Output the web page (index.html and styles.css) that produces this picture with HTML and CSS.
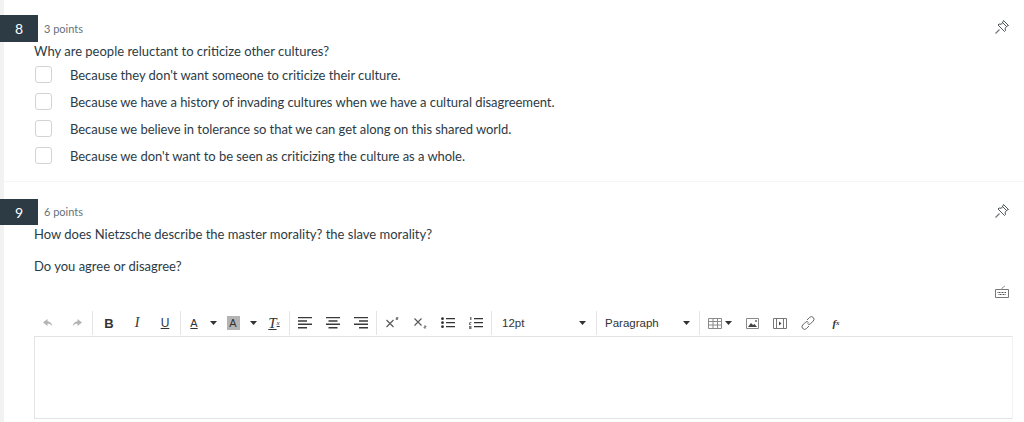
FILE: index.html
```html
<!DOCTYPE html>
<html lang="en">
<head>
<meta charset="utf-8">
<title>Quiz</title>
<link rel="stylesheet" href="styles.css">
</head>
<body>
<svg class="defs" width="0" height="0" aria-hidden="true">
  <symbol id="pin" viewBox="0 0 14 14">
    <path d="M.5 13.500 4.500 9.500" fill="none" stroke="#6d767a" stroke-width="1.100"/>
    <path d="M8.500.5l5 5-1.500.5-1.800 2.200.3 2.300-1 1-6.500-6.500 1-1 2.300.3L7.900 2z" fill="none" stroke="#4f585c" stroke-width="1"/>
    <path d="M7.500 2.500l4 4M5 7l2 2" stroke="#4f585c" stroke-width="1" fill="none"/>
  </symbol>
  <symbol id="caret" viewBox="0 0 7 4"><path d="M0 0h7L3.500 4z" fill="#333"/></symbol>
  <symbol id="align-left" viewBox="0 0 14 12"><path d="M0 0h14v1.300H0zM0 3.200h9v1.600H0zM0 6.500h14v1.600H0zM0 10h9v1.500H0z" fill="#3a3a3a"/></symbol>
  <symbol id="align-center" viewBox="0 0 14 12"><path d="M0 0h14v1.300H0zM2.500 3.200h9v1.600h-9zM0 6.500h14v1.600H0zM2.500 10h9v1.500h-9z" fill="#3a3a3a"/></symbol>
  <symbol id="align-right" viewBox="0 0 14 12"><path d="M0 0h14v1.300H0zM5 3.200h9v1.600H5zM0 6.500h14v1.600H0zM5 10h9v1.500H5z" fill="#3a3a3a"/></symbol>
</svg>
<main class="page">
  <section class="question q8">
    <header class="q-head">
      <span class="q-num">8</span>
      <span class="q-points">3 points</span>
      <svg class="pin" width="14" height="14"><use href="#pin"/></svg>
    </header>
    <p class="q-text">Why are people reluctant to criticize other cultures?</p>
    <ul class="options">
      <li class="option"><span class="check"></span>Because they don't want someone to criticize their culture.</li>
      <li class="option"><span class="check"></span>Because we have a history of invading cultures when we have a cultural disagreement.</li>
      <li class="option"><span class="check"></span>Because we believe in tolerance so that we can get along on this shared world.</li>
      <li class="option"><span class="check"></span>Because we don't want to be seen as criticizing the culture as a whole.</li>
    </ul>
  </section>
  <section class="question q9">
    <header class="q-head q-head-short">
      <span class="q-num">9</span>
      <span class="q-points q-points-up">6 points</span>
      <svg class="pin" width="14" height="14"><use href="#pin"/></svg>
    </header>
    <p class="q-text">How does Nietzsche describe the master morality? the slave morality?</p>
    <p class="q-text q-gap">Do you agree or disagree?</p>
    <div class="kbd-row">
      <svg width="14" height="14" viewBox="0 0 14 14"><path d="M.5 5.500h13v8H.5z" fill="none" stroke="#777"/><path d="M2.500 8.500h9M3.500 10.500h7" fill="none" stroke="#555" stroke-dasharray="1 .5"/><path d="M7 5.500V4l3-2" fill="none" stroke="#999"/></svg>
    </div>
    <div class="toolbar">
      <span class="tb"><svg width="10" height="8" viewBox="0 0 10 8"><path d="M4.500 0 0 3.500 4.500 7V4.800c2 0 3.500.5 5 2.500C9 4.200 7 2.500 4.500 2.300z" fill="#b4b4b4"/></svg></span>
      <span class="tb tb-redo"><svg width="10" height="8" viewBox="0 0 10 8"><path d="M5.500 0 10 3.500 5.500 7V4.800c-2 0-3.500.5-5 2.500C1 4.200 3 2.500 5.500 2.300z" fill="#b4b4b4"/></svg></span>
      <span class="sep sep-wide"></span>
      <span class="tb tb-b">B</span>
      <span class="tb tb-i">I</span>
      <span class="tb tb-u">U</span>
      <span class="sep"></span>
      <span class="tb tb-color">A</span>
      <svg class="caret caret-split" width="7" height="4"><use href="#caret"/></svg>
      <span class="tb tb-color tb-hl"><span class="hl">A</span></span>
      <svg class="caret caret-split" width="7" height="4"><use href="#caret"/></svg>
      <span class="tb tb-clear">T<sub>x</sub></span>
      <span class="sep"></span>
      <span class="tb"><svg width="14" height="12"><use href="#align-left"/></svg></span>
      <span class="tb"><svg width="14" height="12"><use href="#align-center"/></svg></span>
      <span class="tb"><svg width="14" height="12"><use href="#align-right"/></svg></span>
      <span class="sep"></span>
      <span class="tb"><svg width="13" height="12" viewBox="0 0 13 12"><path d="M.5 3l7 7M7.500 3l-7 7" fill="none" stroke="#555" stroke-width="1.100"/><path d="M10 .5h2v1h-2v1h2" fill="none" stroke="#555" stroke-width=".7"/></svg></span>
      <span class="tb"><svg width="13" height="12" viewBox="0 0 13 12"><path d="M.5 1.500l7 7M7.500 1.500l-7 7" fill="none" stroke="#555" stroke-width="1.100"/><path d="M10 9h2v1h-2v1h2" fill="none" stroke="#555" stroke-width=".7"/></svg></span>
      <span class="tb"><svg width="14" height="12" viewBox="0 0 14 12"><path d="M5 1h9v1.300H5zM5 5h9v1.300H5zM5 9h9v1.300H5z" fill="#333"/><circle cx="1.500" cy="1.700" r="1.400" fill="#333"/><circle cx="1.500" cy="5.700" r="1.400" fill="#333"/><circle cx="1.500" cy="9.700" r="1.400" fill="#333"/></svg></span>
      <span class="tb"><svg width="14" height="12" viewBox="0 0 14 12"><path d="M5 1h9v1.300H5zM5 5h9v1.300H5zM5 9h9v1.300H5z" fill="#333"/><path d="M1 0h1.500v3H1zM0 5h2.500v1H0v2h2.500M0 9h2.500v3H0" fill="#777"/></svg></span>
      <span class="sep"></span>
      <span class="select select-size">12pt<svg class="caret" width="7" height="4"><use href="#caret"/></svg></span>
      <span class="sep"></span>
      <span class="select select-format">Paragraph<svg class="caret" width="7" height="4"><use href="#caret"/></svg></span>
      <span class="sep"></span>
      <span class="tb-table"><svg width="14" height="11" viewBox="0 0 14 11"><path d="M.5.500h13v10H.5zM.5 3.500h13M.5 7h13M5 .5v10M9.500.5v10" fill="none" stroke="#8a8a8a"/></svg><svg class="caret" width="7" height="4"><use href="#caret"/></svg></span>
      <span class="tb tb-image"><svg width="13" height="11" viewBox="0 0 13 11"><path d="M.5.500h12v10H.5z" fill="none" stroke="#888"/><path d="M2 9l3-4 2 2 1.500-1L11 9z" fill="#444"/><circle cx="10" cy="3" r="1" fill="#666"/></svg></span>
      <span class="tb"><svg width="14" height="11" viewBox="0 0 14 11"><path d="M.5.500h13v10H.5zM3.500.5v10M10.500.5v10" fill="none" stroke="#777"/><path d="M6 3.500 8.500 5.500 6 7.500z" fill="#444"/></svg></span>
      <span class="tb"><svg width="14" height="14" viewBox="0 0 14 14"><path d="M6 4 8.500 1.500a2 2 0 0 1 3.800 3.500L9.500 7.800a2 2 0 0 1-3-.3M8 10l-2.500 2.500a2 2 0 0 1-3.800-3.500l2.800-2.800a2 2 0 0 1 3 .3" fill="none" stroke="#666"/></svg></span>
      <span class="tb tb-fx">f<sub>x</sub></span>
    </div>
    <div class="editor"></div>
  </section>
</main>
</body>
</html>
```
FILE: styles.css
```css
* { box-sizing: border-box; }
html, body { margin: 0; padding: 0; }
body {
  height: 422px;
  overflow: hidden;
  background: #fff;
  font-family: Lato, "Open Sans", sans-serif;
  color: #2d3b45;
  font-size: 13px;
}
.defs { position: absolute; }
.page {
  border-left: 4px solid #f2f2f2;
  height: 422px;
  padding-top: 15px;
}
.q8 {
  height: 167px;
  border-bottom: 1px solid #f5f5f5;
}
.q9 { padding-top: 17px; }
.q-head {
  display: flex;
  align-items: center;
  height: 27px;
}
.q-head-short { height: 26px; }
.q-num {
  width: 38px;
  height: 100%;
  margin-left: -4px;
  display: flex;
  align-items: center;
  justify-content: center;
  background: #2d3b45;
  color: #fff;
  font-size: 14px;
}
.q-points {
  margin-left: 6px;
  font-size: 11px;
  color: #66717a;
}
.q-points-up { margin-bottom: 2px; }
.pin {
  align-self: flex-start;
  margin: 5px 15px 0 auto;
}
.q-text {
  margin: 0 0 0 30px;
  height: 18px;
  line-height: 18px;
}
.q-gap { margin-top: 14px; }
.options {
  list-style: none;
  margin: 1px 0 0;
  padding: 0 0 0 31px;
}
.option {
  display: flex;
  align-items: center;
  height: 27px;
  letter-spacing: -0.05px;
}
.check {
  width: 17px;
  height: 17px;
  margin-right: 18px;
  border: 1px solid #d0d4d6;
  border-radius: 3px;
  background: #fff;
}
.kbd-row {
  display: flex;
  justify-content: flex-end;
  padding-right: 15px;
  margin-top: 9px;
  height: 26px;
}
.toolbar {
  display: flex;
  align-items: center;
  height: 26px;
  margin-left: 30px;
  font-family: "Liberation Sans", Arial, sans-serif;
  color: #333;
}
.tb {
  width: 28px;
  height: 24px;
  flex: none;
  display: flex;
  align-items: center;
  justify-content: center;
}
.tb-redo { margin-left: 1px; }
.sep {
  width: 1px;
  height: 24px;
  margin: 0 1px;
  flex: none;
  background: #e4e4e4;
}
.sep-wide { margin-right: 2px; }
.tb-b { font-weight: 700; font-size: 13px; }
.tb-i { font-style: italic; font-family: "Liberation Serif", serif; font-size: 14px; }
.tb-u { font-size: 12px; text-decoration: underline; }
.tb-color {
  width: 24px;
  font-size: 11px;
  text-decoration: underline;
}
.tb-hl { width: 26px; text-decoration: none; }
.hl {
  width: 13px;
  height: 14px;
  display: flex;
  align-items: center;
  justify-content: center;
  background: #b4b4b4;
}
.caret { flex: none; }
.caret-split { margin: 0 3px 0 4px; }
.tb-clear { font-style: italic; font-family: "Liberation Serif", serif; font-size: 15px; text-decoration: underline; }
.tb-clear sub, .tb-fx sub { font-size: 7px; }
.select {
  display: flex;
  align-items: center;
  justify-content: space-between;
  height: 24px;
  flex: none;
  font-size: 11.5px;
}
.select-size { width: 102px; padding: 0 9px; }
.select-format { width: 100px; padding: 0 8px 0 7px; }
.tb-table {
  width: 31px;
  padding-left: 7px;
  display: flex;
  align-items: center;
  gap: 3px;
  flex: none;
}
.tb-image { margin-left: 6px; }
.tb-fx { font-family: "Liberation Serif", serif; font-style: italic; font-weight: 700; font-size: 11px; }
.editor {
  height: 83px;
  margin: 0 11px 0 30px;
  border: 1px solid #e3e3e3;
  border-right-color: #f2f2f2;
  background: #fff;
}
```
